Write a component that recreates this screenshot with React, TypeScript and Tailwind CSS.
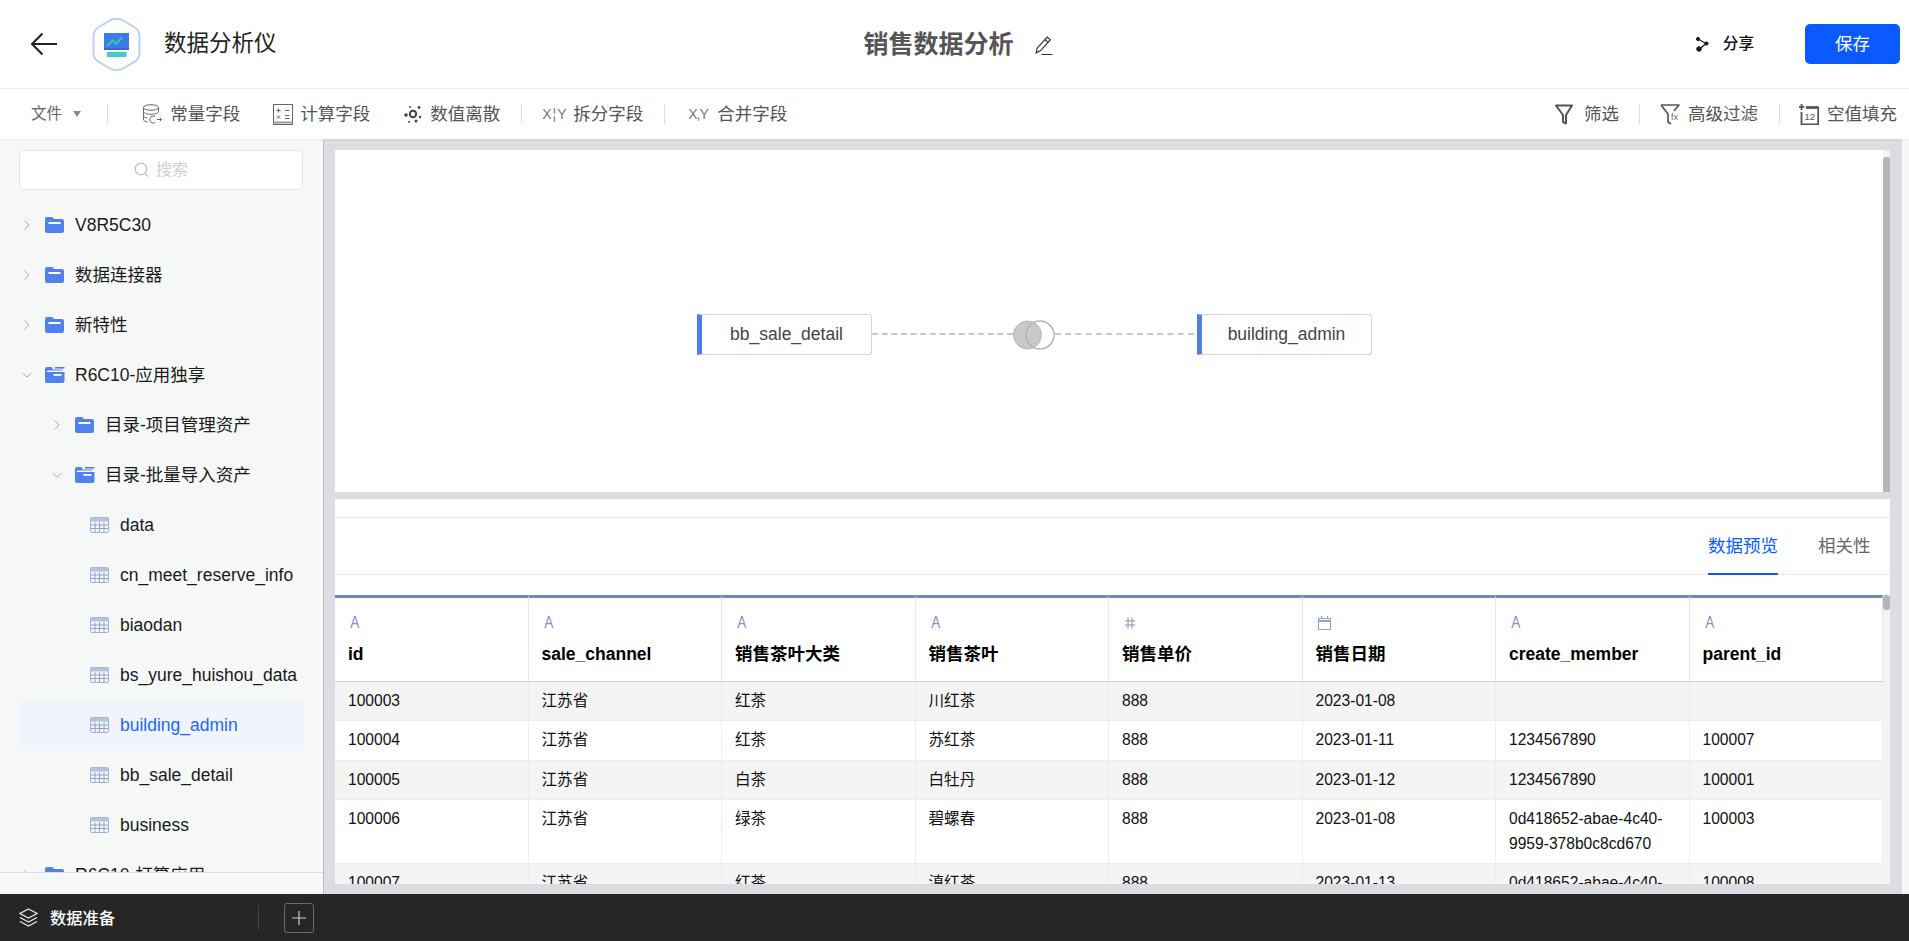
import React from "react";

const Chevron = ({ open }: { open?: boolean }) => (
  <svg width="12" height="12" viewBox="0 0 12 12" fill="none" stroke="#a9abad" strokeWidth="1">
    {open ? <path d="M1.5 4l4.5 4 4.5-4" /> : <path d="M3.5 1.5l4.5 4.5-4.5 4.5" />}
  </svg>
);

const FolderClosed = () => (
  <svg width="19" height="16" viewBox="0 0 19 16">
    <path d="M0 2a2 2 0 0 1 2-2h4.5a2 2 0 0 1 1.5.8L9 2h8a2 2 0 0 1 2 2v10a2 2 0 0 1-2 2H2a2 2 0 0 1-2-2z" fill="#4f82ee" />
    <rect x="3.5" y="5" width="12" height="2" fill="#fff" />
  </svg>
);

const FolderOpen = () => (
  <svg width="20" height="16" viewBox="0 0 20 16">
    <path d="M0 2a2 2 0 0 1 2-2h4.5L8 2.5h9.5v1H3a1.5 1.5 0 0 0-1.5 1.500L19.500 5v9a2 2 0 0 1-2 2H2a2 2 0 0 1-2-2z" fill="#4f82ee" />
    <path d="M10 0h9.5v1.6H10z" fill="#4f82ee" />
    <rect x="8.5" y="7" width="8" height="1.8" fill="#fff" />
  </svg>
);

const TableIcon = () => (
  <svg width="19" height="16" viewBox="0 0 19 16" fill="none">
    <rect x="0.5" y="0.5" width="18" height="15" rx="1.5" stroke="#9fb0d6" />
    <rect x="0.5" y="0.5" width="18" height="4" fill="#b4c1e0" />
    <path d="M1 8h17M1 11.5h17M5 5v10M9.5 5v10M14 5v10" stroke="#8fa3d0" />
  </svg>
);

const Tree = ({ level, open, label }: { level: number; open?: boolean; label: string }) => (
  <div className={level === 0 ? "flex h-[50px] items-center mx-[19px] pl-[2px]" : "flex h-[50px] items-center mx-[19px] pl-[32px]"}>
    <Chevron open={open} />
    <span className="ml-[12px] flex w-[20px] shrink-0">{open ? <FolderOpen /> : <FolderClosed />}</span>
    <span className="ml-[10px] whitespace-nowrap">{label}</span>
  </div>
);

const Leaf = ({ label, active }: { label: string; active?: boolean }) => (
  <div
    className={
      active
        ? "flex h-[50px] items-center mx-[19px] pl-[71px] rounded-[5px] bg-[#f0f4fd] text-[#1a66ff]"
        : "flex h-[50px] items-center mx-[19px] pl-[71px]"
    }
  >
    <TableIcon />
    <span className="ml-[11px] whitespace-nowrap">{label}</span>
  </div>
);

const Vline = ({ cls }: { cls: string }) => <span className={"block w-px h-[20px] bg-[#dcdcdc] shrink-0 " + cls} />;

const DbIcon = () => (
  <svg width="20" height="20" viewBox="0 0 20 20" fill="none" stroke="#666" strokeWidth="1">
    <ellipse cx="9" cy="3.5" rx="7.5" ry="2.8" />
    <path d="M1.5 3.5v4c0 1.6 3.4 2.8 7.5 2.8s7.500-1.200 7.500-2.800v-4M1.500 7.500v4c0 1.200 1.600 2.200 4 2.600M1.500 11.500v4c0 1.200 1.600 2.200 4 2.600" />
    <path d="M13 12.500a3.500 3.500 0 1 0 0 6M15 15.500h4.500M18 14l1.500 1.500L18 17" />
  </svg>
);
const CalcIcon = () => (
  <svg width="20" height="21" viewBox="0 0 20 21" fill="none" stroke="#666" strokeWidth="1">
    <rect x="0.5" y="0.5" width="19" height="20" />
    <path d="M0.5 18.500h19" strokeWidth="2" stroke="#999" />
    <path d="M3.500 6.500h4M5.500 4.500v4M12 6.500h4.500M4 11.500l3 3M7 11.500l-3 3M12 11.500h4.500M12 14.500h4.500" />
  </svg>
);
const ScatterIcon = () => (
  <svg width="18" height="20" viewBox="0 0 18 20" fill="#444">
    <circle cx="9" cy="10" r="3.200" fill="none" stroke="#444" strokeWidth="2" />
    <circle cx="2" cy="11" r="1.800" />
    <circle cx="15" cy="3.500" r="1.400" />
    <circle cx="16" cy="13" r="1.200" />
    <circle cx="12" cy="17" r="1.500" />
    <circle cx="5" cy="18" r="1" />
    <circle cx="6" cy="3" r="0.900" />
  </svg>
);
const FilterIcon = () => (
  <svg width="18" height="21" viewBox="0 0 18 21" fill="none" stroke="#555" strokeWidth="2">
    <path d="M1 1.500h16l-6 9.500v8.500l-3-1.500v-7z" strokeLinejoin="round" />
  </svg>
);
const FxIcon = () => (
  <svg width="20" height="21" viewBox="0 0 20 21" fill="none" stroke="#555" strokeWidth="1.700">
    <path d="M1 1h18l-5 6M1 1l7 9v8l3 2" strokeLinejoin="round" />
    <text x="11" y="16" fontSize="9" fontFamily="'Liberation Sans',sans-serif" fill="#666" stroke="none">fx</text>
  </svg>
);
const FillIcon = () => (
  <svg width="20" height="22" viewBox="0 0 20 22" fill="none" stroke="#555" strokeWidth="1.800">
    <path d="M7 4.500h12.200v16.800H2.500V9M2.500 1v6M0 3.800h5.500" />
    <path d="M7 4.500h12" strokeWidth="2.500" />
    <text x="5.500" y="17" fontSize="9.500" fontFamily="'Liberation Sans',sans-serif" fill="#555" stroke="none">12</text>
  </svg>
);

const Logo = () => (
  <svg width="49" height="53" viewBox="0 0 49 53" fill="none">
    <path d="M17 3c4.500-2.700 10.500-2.700 15 0l10 6c3.500 2 5.500 5 5.500 9v17c0 4-2 7-5.500 9l-10 6c-4.500 2.700-10.500 2.700-15 0l-10-6c-3.500-2-5.500-5-5.500-9V18c0-4 2-7 5.500-9z" stroke="#bcd0fb" strokeWidth="2" fill="#fff" />
    <rect x="12" y="15" width="25" height="17" fill="#4079ea" />
    <path d="M15 28l6-5.500 3 3 6.500-6.500" stroke="#2fd0a8" strokeWidth="2" />
    <rect x="12" y="30.500" width="25" height="1.500" fill="#2a5fcc" />
    <rect x="15" y="34" width="19.500" height="5" fill="#3ed0b8" />
  </svg>
);

const heads: [string, string][] = [
  ["A", "id"],
  ["A", "sale_channel"],
  ["A", "销售茶叶大类"],
  ["A", "销售茶叶"],
  ["#", "销售单价"],
  ["d", "销售日期"],
  ["A", "create_member"],
  ["A", "parent_id"],
];

const rows: string[][] = [
  ["100003", "江苏省", "红茶", "川红茶", "888", "2023-01-08", "", ""],
  ["100004", "江苏省", "红茶", "苏红茶", "888", "2023-01-11", "1234567890", "100007"],
  ["100005", "江苏省", "白茶", "白牡丹", "888", "2023-01-12", "1234567890", "100001"],
  ["100006", "江苏省", "绿茶", "碧螺春", "888", "2023-01-08", "0d418652-abae-4c40-9959-378b0c8cd670", "100003"],
  ["100007", "江苏省", "红茶", "滇红茶", "888", "2023-01-13", "0d418652-abae-4c40-9959-378b0c8cd670", "100008"],
];

const TypeMark = ({ k }: { k: string }) => {
  if (k === "d")
    return (
      <svg width="13" height="14" viewBox="0 0 13 14" fill="none" stroke="#8fa3d0" className="ml-[1px] mt-[3px]">
        <rect x="0.5" y="2.5" width="12" height="11" />
        <path d="M0.5 5h12" strokeWidth="2" />
        <path d="M3.500 0v3M9.500 0v3" />
      </svg>
    );
  if (k === "#")
    return (
      <svg width="12" height="14" viewBox="0 0 12 14" fill="none" stroke="#7d93c7" className="ml-[1px] mt-[3px]">
        <path d="M4 1.500v11M8 1.500v11M1 5h10M1 9h10" />
      </svg>
    );
  return <span className="text-[17px] leading-[20px] font-normal text-[#7d93c7] scale-x-[0.8] inline-block">A</span>;
};

export default function App() {
  return (
    <div className="w-full h-[941px] overflow-hidden flex flex-col bg-white font-['Liberation_Sans','Noto_Sans_CJK_SC',sans-serif]">
      {/* header */}
      <header className="h-[89px] shrink-0 flex items-center border-b border-[#ececec] relative">
        <svg width="28" height="24" viewBox="0 0 28 24" fill="none" stroke="#222" strokeWidth="2" className="ml-[30px]">
          <path d="M27 12H2M12.500 1.500L2 12l10.500 10.500" />
        </svg>
        <span className="ml-[34px]"><Logo /></span>
        <span className="ml-[23px] text-[22.5px] text-[#222]">数据分析仪</span>
        <div className="flex items-center ml-[587px] mt-[2px]">
          <span className="text-[25px] font-bold text-[#555]">销售数据分析</span>
          <svg width="19" height="19" viewBox="0 0 18 18" fill="none" stroke="#333" strokeWidth="1.100" className="ml-[20px]">
            <path d="M3 11.500L12.500 1l3 2.500L6 14l-4 2z" />
            <path d="M10.500 3.500l3 2.500M7 17.500h10.500" />
          </svg>
        </div>
        <div className="ml-auto flex items-center">
          <svg width="14" height="15" viewBox="0 0 14 15" fill="#1a1a1a" stroke="#1a1a1a">
            <path d="M3 2l8 4.500L4 12.500" fill="none" strokeWidth="1.200" />
            <circle cx="3" cy="2" r="1.600" />
            <circle cx="11.500" cy="6.500" r="1.600" />
            <circle cx="4" cy="12" r="2.300" />
          </svg>
          <span className="ml-[14px] text-[15.6px] font-medium text-[#111]">分享</span>
          <button className="ml-[51px] mr-[9px] w-[95px] h-[40px] rounded-[5px] bg-[#0a5aff] text-white text-[17.5px]">保存</button>
        </div>
      </header>

      {/* toolbar */}
      <div className="h-[50px] shrink-0 flex items-center text-[17.5px] text-[#555] relative z-10 shadow-[0_1px_2px_rgba(0,0,0,0.06)]">
        <span className="ml-[31px] text-[15.6px] text-[#666]">文件</span>
        <span className="ml-[11px] w-0 h-0 border-x-[4.5px] border-x-transparent border-t-[6px] border-t-[#888]" />
        <Vline cls="ml-[26px]" />
        <span className="ml-[34px] flex"><DbIcon /></span>
        <span className="ml-[8px]">常量字段</span>
        <span className="ml-[33px] flex"><CalcIcon /></span>
        <span className="ml-[7px]">计算字段</span>
        <span className="ml-[34px] flex"><ScatterIcon /></span>
        <span className="ml-[8px]">数值离散</span>
        <Vline cls="ml-[21px] bg-[#c8c8c8]" />
        <span className="ml-[20px] w-[23px] text-[14px] text-[#777] tracking-[1px] whitespace-nowrap">X¦Y</span>
        <span className="ml-[8px]">拆分字段</span>
        <Vline cls="ml-[21px]" />
        <span className="ml-[23px] w-[18px] text-[14px] text-[#777] whitespace-nowrap tracking-[-1px]">X,Y</span>
        <span className="ml-[11px]">合并字段</span>
        <div className="ml-auto flex items-center">
          <FilterIcon />
          <span className="ml-[11px]">筛选</span>
          <Vline cls="ml-[20px]" />
          <span className="ml-[20px] flex"><FxIcon /></span>
          <span className="ml-[8px]">高级过滤</span>
          <Vline cls="ml-[21px]" />
          <span className="ml-[19px] flex"><FillIcon /></span>
          <span className="ml-[8px] mr-[12px]">空值填充</span>
        </div>
      </div>

      {/* main */}
      <div className="flex-1 min-h-0 flex">
        <aside className="w-[324px] shrink-0 flex flex-col bg-[#f6f8f8] border-r border-[#bcbdc0] text-[17.5px] text-[#1a1a1a]">
          <div className="mt-[11px] h-[40px] shrink-0 ml-[19px] w-[284px] rounded-[5px] border border-[#e2e4e6] bg-white flex items-center justify-center text-[#cfcfcf] text-[16px]">
            <svg width="15" height="16" viewBox="0 0 15 16" fill="none" stroke="#bdbdbd" strokeWidth="1.300">
              <circle cx="7" cy="7" r="5.800" />
              <path d="M11 11.500l3 3" />
            </svg>
            <span className="ml-[7px]">搜索</span>
          </div>
          <div className="flex-1 min-h-0 overflow-hidden mt-[10px]">
            <Tree level={0} label="V8R5C30" />
            <Tree level={0} label="数据连接器" />
            <Tree level={0} label="新特性" />
            <Tree level={0} open label="R6C10-应用独享" />
            <Tree level={1} label="目录-项目管理资产" />
            <Tree level={1} open label="目录-批量导入资产" />
            <Leaf label="data" />
            <Leaf label="cn_meet_reserve_info" />
            <Leaf label="biaodan" />
            <Leaf label="bs_yure_huishou_data" />
            <Leaf active label="building_admin" />
            <Leaf label="bb_sale_detail" />
            <Leaf label="business" />
            <Tree level={0} label="R6C10-打算应用" />
          </div>
          <div className="h-[22px] shrink-0 border-t border-[#dcdde1]" />
        </aside>

        <div className="flex-1 min-w-0 flex">
          <div className="flex-1 min-w-0 bg-[#dcdde1] pl-[11px] pr-[12px] pt-[11px] pb-[10px] flex flex-col">
            {/* canvas */}
            <div className="h-[342px] shrink-0 bg-white relative">
              <div className="absolute left-[362px] top-[164px] w-[175px] h-[41px] border border-[#d4d4d4] border-l-[5px] border-l-[#4f7ee8] rounded-r-[3px] flex items-center justify-center text-[17.5px] text-[#444] bg-white">bb_sale_detail</div>
              <div className="absolute left-[862px] top-[164px] w-[175px] h-[41px] border border-[#d4d4d4] border-l-[5px] border-l-[#4f7ee8] rounded-r-[3px] flex items-center justify-center text-[17.5px] text-[#444] bg-white">building_admin</div>
              <div className="absolute left-[537px] top-[183px] w-[141px] border-t-2 border-dashed border-[#c8c8c8]" />
              <div className="absolute left-[720px] top-[183px] w-[139px] border-t-2 border-dashed border-[#c8c8c8]" />
              <svg width="42" height="30" viewBox="0 0 42 30" className="absolute left-[678px] top-[170px]">
                <circle cx="14.500" cy="15" r="14" fill="#c9c9c9" stroke="#b9b9b9" />
                <circle cx="27" cy="15" r="14" fill="none" stroke="#b4b4b4" strokeWidth="1.500" />
              </svg>
              <div className="absolute right-0 top-0 bottom-0 w-[7px] bg-[#f3f3f5]">
                <div className="mt-[7px] h-[335px] bg-[#b4b5b8] rounded-t-[3px]" />
              </div>
            </div>

            {/* data */}
            <div className="flex-1 min-h-0 mt-[7px] bg-white flex flex-col">
              <div className="h-[18px] shrink-0" />
              <div className="h-[58px] shrink-0 border-y border-[#e8e9eb] flex justify-end text-[17.5px]">
                <div className="mr-[40px] flex items-center h-[57px] relative text-[#0a5aff]">
                  数据预览
                  <span className="absolute left-0 right-0 bottom-0 h-[2px] bg-[#0a5aff]" />
                </div>
                <div className="mr-[19px] flex items-center h-[57px] text-[#666] w-[53px]">相关性</div>
              </div>
              <div className="h-[20px] shrink-0" />
              <div className="flex-1 min-h-0 overflow-hidden relative">
                <table className="table-fixed w-[1548px] border-separate border-spacing-0 text-[15.6px] text-[#111]">
                  <colgroup>
                    {heads.map((_, i) => (
                      <col key={i} className="w-[193.5px]" />
                    ))}
                  </colgroup>
                  <thead>
                    <tr>
                      {heads.map(([k, h], i) => (
                        <th key={i} className="h-[87px] p-0 align-top text-left border-t-[3px] border-t-[#7289bf] border-b border-b-[#cccccc] border-r border-r-[#e8e9eb]">
                          <div className="pl-[14px] pt-[15px] h-[35px] flex items-start">
                            <TypeMark k={k} />
                          </div>
                          <div className="pl-[13px] mt-[9px] text-[17.5px] font-bold leading-[24px] text-black">{h}</div>
                        </th>
                      ))}
                    </tr>
                  </thead>
                  <tbody>
                    {rows.map((r, ri) => (
                      <tr key={ri} className={ri % 2 === 0 ? "bg-[#f4f4f4]" : "bg-white"}>
                        {r.map((c, ci) => (
                          <td key={ci} className="h-[39.25px] px-[13px] pt-[6px] pb-[7px] align-top leading-[25px] border-r border-b border-[#ebecee] break-words">
                            {c}
                          </td>
                        ))}
                      </tr>
                    ))}
                  </tbody>
                </table>
                <div className="absolute right-0 top-0 bottom-0 w-[7px] bg-[#f3f3f5]">
                  <div className="h-[15px] bg-[#b4b5b8] rounded-[3px]" />
                </div>
              </div>
            </div>
          </div>
          <div className="w-[7px] shrink-0 bg-[#f5f6f7]" />
        </div>
      </div>

      {/* bottom */}
      <footer className="h-[47px] shrink-0 bg-[#252628] flex items-center text-white">
        <svg width="19" height="19" viewBox="0 0 19 19" fill="none" stroke="#e8e8e8" strokeWidth="1.200" className="ml-[19px]">
          <path d="M9.500 1L18 5.500l-8.500 4.500L1 5.500z" />
          <path d="M1 9.500l8.500 4.500L18 9.500M1 13.500L9.500 18l8.500-4.500" />
        </svg>
        <span className="ml-[12px] text-[16.25px] font-medium mt-[1px]">数据准备</span>
        <span className="ml-[143px] w-px h-[25px] bg-[#44454a]" />
        <span className="ml-[25px] w-[30px] h-[30px] rounded-[3px] border border-[#6a6b70] flex items-center justify-center">
          <svg width="16" height="16" viewBox="0 0 16 16" stroke="#c9c9c9" strokeWidth="1.200">
            <path d="M8 1v14M1 8h14" />
          </svg>
        </span>
      </footer>
    </div>
  );
}
